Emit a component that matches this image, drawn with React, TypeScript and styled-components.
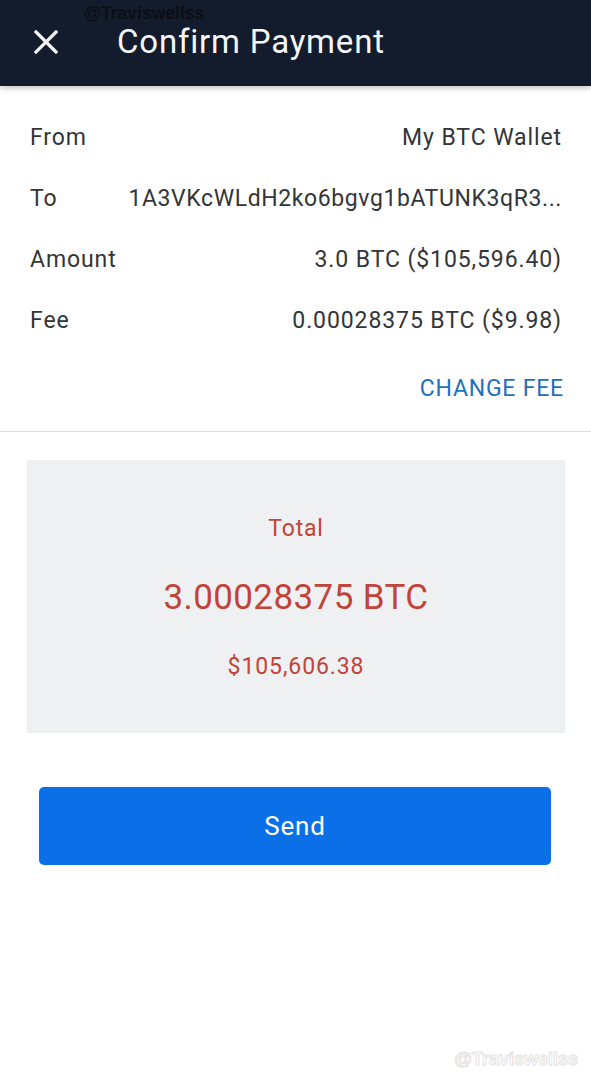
import React from 'react'
import styled, { createGlobalStyle } from 'styled-components'

const GlobalStyle = createGlobalStyle`
	body {
		margin: 0;
		background: #ffffff;
		font-family: Roboto, "Liberation Sans", sans-serif;
	}
`

const Page = styled.div`
	width: 591px;
	min-height: 1080px;
	display: flex;
	flex-direction: column;
	position: relative;
	background: #ffffff;
`

const Header = styled.header`
	height: 86px;
	background: #131c2d;
	display: flex;
	align-items: center;
	padding-left: 32px;
	gap: 57px;
	box-shadow: 0 2px 6px rgba(0, 0, 0, 0.25);
	position: relative;
`

const CloseButton = styled.div`
	width: 28px;
	height: 28px;
	display: flex;
	align-items: center;
	justify-content: center;
	margin-top: -2px;
`

const Title = styled.h1`
	margin: 0;
	margin-top: -4px;
	color: #f4f6f8;
	font-size: 33px;
	font-weight: 400;
	letter-spacing: 0.8px;
`

const Watermark = styled.span`
	position: absolute;
	left: 84px;
	top: 3px;
	font-family: "Liberation Sans", Arial, sans-serif;
	font-weight: 700;
	font-size: 17.5px;
	color: #0c0f16;
`

const CornerMark = styled.span`
	position: absolute;
	right: 13px;
	bottom: 10px;
	font-family: "Liberation Sans", Arial, sans-serif;
	font-weight: 700;
	font-size: 18px;
	color: #ffffff;
	-webkit-text-stroke: 1px #e4e4e4;
`

const Details = styled.section`
	display: flex;
	flex-direction: column;
	padding: 21px 30px 0 30px;
	border-bottom: 1px solid #dcdcdc;
`

const Row = styled.div`
	display: flex;
	justify-content: space-between;
	align-items: center;
	height: 61px;
	font-size: 23px;
	letter-spacing: 0.9px;
	color: #333538;
`

const Label = styled.span`
	flex-shrink: 0;
`

const Value = styled.span<{ $spacing?: number }>`
	white-space: nowrap;
	text-align: right;
	margin-right: -1px;
	letter-spacing: ${(p) => (p.$spacing ?? 0.9)}px;
`

const ChangeFee = styled.div`
	align-self: flex-end;
	margin: 24px -3px 29px 0;
	color: #1f6fbf;
	font-size: 23px;
	letter-spacing: 0.8px;
`

const TotalBox = styled.section`
	margin: 28px 26px 0 27px;
	height: 273px;
	background: #eef0f2;
	display: flex;
	flex-direction: column;
	align-items: center;
	justify-content: center;
	color: #c1433a;
`

const TotalLabel = styled.div`
	font-size: 23px;
	letter-spacing: 0.8px;
	margin-top: 2px;
`

const TotalAmount = styled.div`
	font-size: 35px;
	letter-spacing: 0.4px;
	margin-top: 35px;
`

const TotalFiat = styled.div`
	font-size: 23px;
	letter-spacing: 0.9px;
	margin-top: 35px;
`

const SendButton = styled.button`
	margin: 54px 40px 0 39px;
	height: 78px;
	border: none;
	border-radius: 5px;
	background: #0b6fe8;
	color: #ffffff;
	font-family: inherit;
	font-size: 26px;
	letter-spacing: 0.8px;
	cursor: pointer;
`

const App = () => {
	return (
		<Page>
			<GlobalStyle />
			<Header>
				<CloseButton>
					<svg width="24" height="24" viewBox="0 0 24 24">
						<path d="M2 2 L22 22 M22 2 L2 22" stroke="#f4f6f8" strokeWidth="3.2" strokeLinecap="square" />
					</svg>
				</CloseButton>
				<Title>Confirm Payment</Title>
				<Watermark>@Traviswellss</Watermark>
			</Header>
			<Details>
				<Row>
					<Label>From</Label>
					<Value>My BTC Wallet</Value>
				</Row>
				<Row>
					<Label>To</Label>
					<Value $spacing={0.6}>1A3VKcWLdH2ko6bgvg1bATUNK3qR3...</Value>
				</Row>
				<Row>
					<Label>Amount</Label>
					<Value>3.0 BTC ($105,596.40)</Value>
				</Row>
				<Row>
					<Label>Fee</Label>
					<Value>0.00028375 BTC ($9.98)</Value>
				</Row>
				<ChangeFee>CHANGE FEE</ChangeFee>
			</Details>
			<TotalBox>
				<TotalLabel>Total</TotalLabel>
				<TotalAmount>3.00028375 BTC</TotalAmount>
				<TotalFiat>$105,606.38</TotalFiat>
			</TotalBox>
			<SendButton>Send</SendButton>
			<CornerMark>@Traviswellss</CornerMark>
		</Page>
	)
}
export default App
